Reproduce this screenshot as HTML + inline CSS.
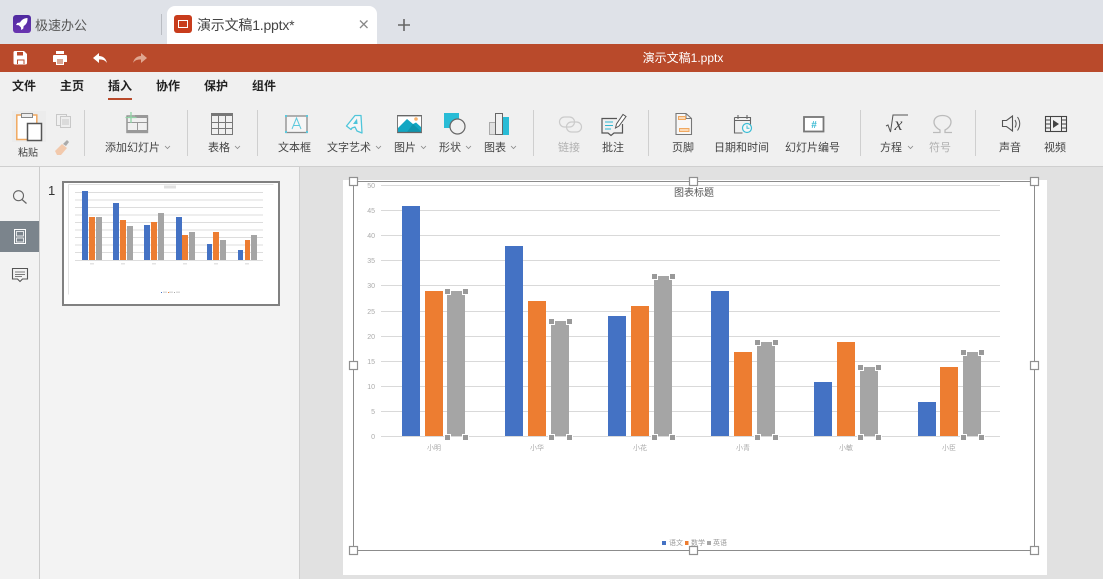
<!DOCTYPE html>
<html lang="zh">
<head>
<meta charset="utf-8">
<title>演示文稿1.pptx</title>
<style>
html,body{margin:0;padding:0;width:1103px;height:579px;overflow:hidden;background:#e1e1e1}
svg{display:block;position:absolute;left:0;top:0}
text{font-family:"Liberation Sans","Noto Sans CJK SC",sans-serif}
.r{font-size:11px;fill:#444}
.d{font-size:11px;fill:#b0b0b0}
.m{font-size:12px;fill:#222;font-weight:700}
.y{font-size:7px;fill:#aaa;text-anchor:end}
.c{font-size:7px;fill:#aaa;text-anchor:middle}
.l{font-size:7px;fill:#999}
.ch{fill:none;stroke:#888;stroke-width:.8}
.sq{fill:#999;stroke:#fff;stroke-width:1}
.h{fill:#fff;stroke:#909090;stroke-width:1.200}
.g{stroke:#d9d9d9;stroke-width:1}
</style>
</head>
<body>
<svg width="1103" height="579" viewBox="0 0 1103 579" xmlns="http://www.w3.org/2000/svg">
<defs>
<linearGradient id="pu" x1="0" y1="0" x2="0" y2="1"><stop offset="0" stop-color="#4f2aa0"/><stop offset="1" stop-color="#6a35b0"/></linearGradient>
</defs>
<!-- backgrounds -->
<rect width="1103" height="44" fill="#dfe2e8"/>
<rect y="44" width="1103" height="28" fill="#b94a2b"/>
<rect y="72" width="1103" height="94" fill="#f0f0f0"/>
<rect y="166" width="1103" height="1" fill="#cfcfcf"/>
<rect y="167" width="40" height="412" fill="#f2f2f2"/>
<rect x="39" y="167" width="1" height="412" fill="#cccccc"/>
<rect x="40" y="167" width="259" height="412" fill="#f3f3f3"/>
<rect x="299" y="167" width="1" height="412" fill="#cfcfcf"/>
<rect x="300" y="167" width="803" height="412" fill="#e1e1e1"/>

<!-- tabs -->
<rect x="13" y="15" width="18" height="18" rx="3" fill="url(#pu)"/>
<path d="M27.500 18c-3.500.2-5.800 1.700-7.500 4.500l-2.800.5-1.200 2 2.800.2 2.200 2.300.2 2.500 2-1.200.5-2.800c2.800-1.700 4-4 3.800-8z" fill="#fff"/>
<text x="35" y="30" font-size="13" fill="#555">极速办公</text>
<rect x="161" y="14" width="1" height="21" fill="#b9bcc2"/>
<path d="M167 44V14a8 8 0 0 1 8-8h194a8 8 0 0 1 8 8v30z" fill="#fff"/>
<rect x="174" y="15" width="18" height="18" rx="3" fill="#c83c1c"/>
<rect x="178.500" y="20.500" width="9" height="7" fill="none" stroke="#fff" stroke-width="1"/>
<text x="197" y="30" font-size="14" fill="#444" letter-spacing="-.2">演示文稿1.pptx*</text>
<path d="M360 20.500l7.500 7.500m0-7.500l-7.500 7.500" stroke="#888" stroke-width="1.300" fill="none"/>
<path d="M404 19v12M398 25h12" stroke="#666" stroke-width="1.600" fill="none"/>

<!-- quick bar -->
<path d="M15 51h9l3 3v9a1.500 1.500 0 0 1-1.500 1.500h-10.500a1.500 1.500 0 0 1-1.500-1.500V52.500A1.500 1.500 0 0 1 15 51z" fill="#fff"/>
<path d="M17 52v3.500h6V52zM17 59.500V64h7.500v-4.500z" fill="#b94a2b"/>
<path d="M18 60.500h5.500V64H18z" fill="#fff"/>
<path d="M56 51h8v3h-8zM54 55h12a1 1 0 0 1 1 1v6h-3v3h-8v-3h-3v-6a1 1 0 0 1 1-1z" fill="#fff"/>
<rect x="57" y="59" width="6" height="5" fill="#d9a795"/>
<path d="M93 58l6-5v3c4 0 7 2.500 8 7-2-3-4-3.500-8-3.500V63z" fill="#fff"/>
<path d="M147 58l-6-5v3c-4 0-7 2.500-8 7 2-3 4-3.500 8-3.500V63z" fill="#e0a791"/>
<text x="683" y="62" font-size="12" fill="#fff" text-anchor="middle">演示文稿1.pptx</text>

<!-- menu -->
<text class="m" x="12" y="90">文件</text>
<text class="m" x="60" y="90">主页</text>
<text class="m" x="108" y="90">插入</text>
<text class="m" x="156" y="90">协作</text>
<text class="m" x="204" y="90">保护</text>
<text class="m" x="252" y="90">组件</text>
<rect x="108" y="98" width="24" height="2" fill="#b94a2b"/>

<!-- separators -->
<g fill="#cfcfcf">
<rect x="84" y="110" width="1" height="46"/><rect x="187" y="110" width="1" height="46"/>
<rect x="257" y="110" width="1" height="46"/><rect x="533" y="110" width="1" height="46"/>
<rect x="648" y="110" width="1" height="46"/><rect x="860" y="110" width="1" height="46"/>
<rect x="975" y="110" width="1" height="46"/>
</g>

<!-- paste -->
<rect x="12" y="111" width="34" height="31" fill="#ececec"/>
<rect x="16.800" y="115" width="20" height="24.500" fill="#fff" stroke="#f0a860" stroke-width="1.500"/>
<rect x="21.500" y="113.500" width="11" height="4" fill="#eee" stroke="#888"/>
<rect x="27.500" y="123.500" width="14" height="17" fill="#fff" stroke="#555" stroke-width="1.500"/>
<text x="18" y="156" font-size="10" fill="#444">粘贴</text>
<g fill="none" stroke="#c8c8c8"><rect x="56.500" y="114.500" width="10" height="11"/><rect x="60.500" y="116.500" width="10" height="11" fill="#eee"/><path d="M62 120h7M62 122h7M62 124h7"/></g>
<path d="M55 151l7-7 5 4-6 7h-4z" fill="#f2c9ac"/><path d="M63 144l4-4 2 2-3 4z" fill="#aaa"/>

<!-- add slide -->
<rect x="127" y="116" width="20.500" height="16.500" fill="none" stroke="#888" stroke-width="1.300"/>
<rect x="135" y="115" width="13" height="3" fill="#999"/>
<rect x="127" y="130" width="21" height="3" fill="#999"/>
<path d="M137.500 123v8M127 122.500h20" stroke="#999" fill="none"/>
<path d="M131 112v11M125.500 117.500h11" stroke="#8fd3a5" stroke-width="1.300" fill="none"/>
<text class="r" x="105" y="151">添加幻灯片</text>
<path class="ch" d="M165 146l2.500 2.500 2.500-2.500"/>

<!-- table -->
<rect x="211.500" y="113.500" width="21" height="21" fill="none" stroke="#777" stroke-width="1"/>
<rect x="211" y="113" width="22" height="3" fill="#777"/>
<path d="M218.500 116v18M225.500 116v18M212 122.500h21M212 128.500h21" stroke="#777" fill="none"/>
<text class="r" x="208" y="151">表格</text>
<path class="ch" d="M235 146l2.500 2.500 2.500-2.500"/>

<!-- text box -->
<rect x="286" y="116" width="21" height="16.500" fill="#f6f6f6" stroke="#8a8a8a" stroke-width="1.300"/>
<g fill="#5cc9dd"><rect x="285" y="115" width="2" height="2"/><rect x="306" y="115" width="2" height="2"/><rect x="285" y="131" width="2" height="2"/><rect x="306" y="131" width="2" height="2"/></g>
<path d="M292 129l4.500-11 4.500 11M293.500 125.500h6" fill="none" stroke="#5cc9dd" stroke-width="1"/>
<text class="r" x="278" y="151">文本框</text>

<!-- word art -->
<path d="M346.500 126l8.500-10.500h6l1 17.500-5-2-2-4-3 1-1 1.500z" fill="#f6f6f6" stroke="#4fc5da" stroke-width="1.300" stroke-linejoin="round"/>
<path d="M353 124l4-5.500.6 5.500z" fill="#4fc5da"/>
<text class="r" x="327" y="151">文字艺术</text>
<path class="ch" d="M376 146l2.500 2.500 2.500-2.500"/>

<!-- picture -->
<rect x="397.500" y="115.500" width="24" height="17" fill="#fff"/>
<path d="M398 132v-4l9-9 6 5 3-1.500 5.500 5V132z" fill="#12a7c3"/>
<path d="M407 132l6-8 8.500 8z" fill="#0f95ad"/>
<circle cx="416" cy="119" r="1.800" fill="#f8b26a"/>
<path d="M397 115.700h25M397 132.500h25" stroke="#666" stroke-width="1.300"/>
<path d="M397.500 115.500v17M421.500 115.500v17" stroke="#777"/>
<text class="r" x="394" y="151">图片</text>
<path class="ch" d="M421 146l2.500 2.500 2.500-2.500"/>

<!-- shape -->
<rect x="444" y="113" width="15" height="15" fill="#29bcd6"/>
<circle cx="457.500" cy="126.500" r="7.500" fill="#f0f0f0" stroke="#666" stroke-width="1.200"/>
<text class="r" x="439" y="151">形状</text>
<path class="ch" d="M466 146l2.500 2.500 2.500-2.500"/>

<!-- chart icon -->
<rect x="489.500" y="122.500" width="6" height="12" fill="#e0e0e0" stroke="#aaa"/>
<rect x="502" y="117" width="7" height="18" fill="#29bcd6"/>
<rect x="495.500" y="113.500" width="7" height="21" fill="#f0f0f0" stroke="#666"/>
<text class="r" x="484" y="151">图表</text>
<path class="ch" d="M511 146l2.500 2.500 2.500-2.500"/>

<!-- link -->
<g fill="none" stroke="#cbcbcb" stroke-width="1.200"><rect x="559.500" y="117" width="15" height="10" rx="5"/><rect x="566.500" y="122" width="15" height="10" rx="5"/></g>
<text class="d" x="558" y="151">链接</text>

<!-- comment -->
<path d="M617 118.500h-15v14.500h6l3 2.500 3-2.500h8.500v-9" fill="none" stroke="#555" stroke-width="1.200"/>
<path d="M605 122h8M605 125.500h8M605 129h6" stroke="#2fb8d2" fill="none"/>
<path d="M615.500 128l1-4 6.500-9.500 3 2-7 9.500z" fill="#fff" stroke="#555"/>
<text class="r" x="602" y="151">批注</text>

<!-- footer -->
<path d="M676 113.500h10l5.500 5v16h-15.500z" fill="#f7f7f7" stroke="#777" stroke-width="1.100"/>
<path d="M686 113.500v5h5" fill="none" stroke="#777"/>
<rect x="678.500" y="116.500" width="7" height="3" fill="#fbd9b5" stroke="#f0a860"/>
<rect x="679.500" y="128.500" width="9.500" height="3" fill="#fbd9b5" stroke="#f0a860"/>
<text class="r" x="672" y="151">页脚</text>

<!-- date -->
<path d="M734.500 117.500h16v7M734.500 117.500v15.500h8" fill="none" stroke="#666" stroke-width="1.100"/>
<path d="M734.500 120.500h16M738 115v4M747 115v4" fill="none" stroke="#666" stroke-width="1.100"/>
<circle cx="747" cy="128" r="4.500" fill="#f7f7f7" stroke="#3abdd5" stroke-width="1.200"/>
<path d="M747 125.500v2.800h2.500" fill="none" stroke="#3abdd5"/>
<text class="r" x="714" y="151">日期和时间</text>

<!-- slide number -->
<rect x="804" y="117" width="19.500" height="14.500" fill="#fff" stroke="#777" stroke-width="1.800"/>
<text x="814" y="128" font-size="10" fill="#36b9d2" text-anchor="middle" font-weight="700">#</text>
<text class="r" x="785" y="151">幻灯片编号</text>

<!-- equation -->
<path d="M886 126l2-1 2.500 7 2.500-17h15" fill="none" stroke="#555" stroke-width="1"/>
<text x="894.500" y="130" font-size="18" font-style="italic" fill="#444" style="font-family:'Liberation Serif',serif">x</text>
<text class="r" x="880" y="151">方程</text>
<path class="ch" d="M908 146l2.500 2.500 2.500-2.500"/>

<!-- omega -->
<path d="M933 132.500h7v-2.500c-3.800-2-6-4.800-6-8 0-4 3.600-6.500 8.500-6.500s8.500 2.500 8.500 6.500c0 3.200-2.200 6-6 8v2.500h7" fill="none" stroke="#bbb" stroke-width="1.300"/>
<text class="d" x="929" y="151">符号</text>

<!-- sound -->
<path d="M1002.500 120.500h4l6-4.500v15l-6-4.500h-4z" fill="none" stroke="#555" stroke-width="1.100"/>
<path d="M1015 120c1.500 2.500 1.500 5 0 7.500M1017.500 117c3 4.500 3 9 0 13.500" fill="none" stroke="#555" stroke-width="1"/>
<text class="r" x="999" y="151">声音</text>

<!-- video -->
<rect x="1045.500" y="116.500" width="21" height="15" fill="none" stroke="#444" stroke-width="1.100"/>
<path d="M1050.500 116.500v15M1061.500 116.500v15M1045.500 120h5M1045.500 124h5M1045.500 128h5M1061.500 120h5M1061.500 124h5M1061.500 128h5" stroke="#444" fill="none"/>
<path d="M1053 120l6 4-6 4z" fill="#444"/>
<text class="r" x="1044" y="151">视频</text>

<!-- sidebar -->
<circle cx="18.500" cy="195.700" r="5" fill="none" stroke="#666" stroke-width="1.100"/>
<path d="M22 199.500l4.500 4" stroke="#666" stroke-width="1.200"/>
<rect y="221" width="39" height="31" fill="#7b848c"/>
<rect x="14.500" y="229.500" width="11" height="14" fill="none" stroke="#fff"/>
<rect x="16.500" y="231.500" width="7" height="4.500" fill="none" stroke="#fff" stroke-width=".8"/>
<rect x="16.500" y="238" width="7" height="4" fill="none" stroke="#fff" stroke-width=".8"/>
<path d="M12.500 268.500h15v10.500h-5l-2.500 2.500-2.500-2.500h-5z" fill="none" stroke="#555" stroke-width="1.100"/>
<path d="M15 272h10M15 274.500h10M15 276.500h7" stroke="#555" fill="none" stroke-width=".8"/>

<!-- thumbnail -->
<text x="48" y="195" font-size="13" fill="#333">1</text>
<rect x="63" y="182" width="216" height="123" fill="#fff" stroke="#808080" stroke-width="2"/>
<path d="M68.500 184.500h205M68.500 184.500v110" stroke="#e2e2e2" fill="none"/>
<path d="M75 192.500h188M75 200h188M75 207.500h188M75 215h188M75 222.500h188M75 230h188M75 237.500h188M75 245h188M75 252.500h188M75 260.500h188" stroke="#ddd" fill="none"/>
<rect x="164" y="185.500" width="12" height="3" fill="#e0e0e0"/>
<g fill="#4472c4"><rect x="82" y="191" width="6" height="69"/><rect x="113" y="203" width="6" height="57"/><rect x="144" y="225" width="6" height="35"/><rect x="176" y="217" width="6" height="43"/><rect x="207" y="244" width="5" height="16"/><rect x="238" y="250" width="5" height="10"/></g>
<g fill="#ed7d31"><rect x="89" y="217" width="6" height="43"/><rect x="120" y="220" width="6" height="40"/><rect x="151" y="222" width="6" height="38"/><rect x="182" y="235" width="6" height="25"/><rect x="213" y="232" width="6" height="28"/><rect x="245" y="240" width="5" height="20"/></g>
<g fill="#a5a5a5"><rect x="96" y="217" width="6" height="43"/><rect x="127" y="226" width="6" height="34"/><rect x="158" y="213" width="6" height="47"/><rect x="189" y="232" width="6" height="28"/><rect x="220" y="240" width="6" height="20"/><rect x="251" y="235" width="6" height="25"/></g>
<g fill="#e3e3e3"><rect x="90" y="263" width="4" height="1.500"/><rect x="121" y="263" width="4" height="1.500"/><rect x="152" y="263" width="4" height="1.500"/><rect x="183" y="263" width="4" height="1.500"/><rect x="214" y="263" width="4" height="1.500"/><rect x="245" y="263" width="4" height="1.500"/></g>
<rect x="161" y="292" width="1" height="1" fill="#4472c4"/><rect x="168" y="292" width="1" height="1" fill="#ed7d31"/><rect x="174" y="292" width="1" height="1" fill="#a5a5a5"/>
<rect x="163" y="291.500" width="4" height="1.500" fill="#ddd"/><rect x="169" y="291.500" width="4" height="1.500" fill="#ddd"/><rect x="176" y="291.500" width="4" height="1.500" fill="#ddd"/>

<!-- slide -->
<rect x="343" y="180" width="704" height="395" fill="#fff"/>

<!-- gridlines -->
<path class="g" d="M381 185.500h619M381 210.500h619M381 235.500h619M381 260.500h619M381 285.500h619M381 311.500h619M381 336.500h619M381 361.500h619M381 386.500h619M381 411.500h619M381 436.500h619"/>
<text class="y" x="375" y="188">50</text><text class="y" x="375" y="213">45</text><text class="y" x="375" y="238">40</text><text class="y" x="375" y="263">35</text><text class="y" x="375" y="288">30</text><text class="y" x="375" y="314">25</text><text class="y" x="375" y="339">20</text><text class="y" x="375" y="364">15</text><text class="y" x="375" y="389">10</text><text class="y" x="375" y="414">5</text><text class="y" x="375" y="439">0</text>
<text x="694" y="196" font-size="10" fill="#555" text-anchor="middle">图表标题</text>

<!-- bars -->
<g fill="#4472c4"><rect x="402" y="206" width="18" height="230"/><rect x="505" y="246" width="18" height="190"/><rect x="608" y="316" width="18" height="120"/><rect x="711" y="291" width="18" height="145"/><rect x="814" y="382" width="18" height="54"/><rect x="918" y="402" width="18" height="34"/></g>
<g fill="#ed7d31"><rect x="425" y="291" width="18" height="145"/><rect x="528" y="301" width="18" height="135"/><rect x="631" y="306" width="18" height="130"/><rect x="734" y="352" width="18" height="84"/><rect x="837" y="342" width="18" height="94"/><rect x="940" y="367" width="18" height="69"/></g>
<g fill="#a5a5a5"><rect x="447" y="291" width="18" height="145"/><rect x="551" y="321" width="18" height="115"/><rect x="654" y="276" width="18" height="160"/><rect x="757" y="342" width="18" height="94"/><rect x="860" y="367" width="18" height="69"/><rect x="963" y="352" width="18" height="84"/></g>
<!-- small selection squares on gray bars -->
<g class="sq">
<rect x="444.500" y="288.500" width="6" height="6"/><rect x="462.500" y="288.500" width="6" height="6"/><rect x="444.500" y="434.500" width="6" height="6"/><rect x="462.500" y="434.500" width="6" height="6"/>
<rect x="548.500" y="318.500" width="6" height="6"/><rect x="566.500" y="318.500" width="6" height="6"/><rect x="548.500" y="434.500" width="6" height="6"/><rect x="566.500" y="434.500" width="6" height="6"/>
<rect x="651.500" y="273.500" width="6" height="6"/><rect x="669.500" y="273.500" width="6" height="6"/><rect x="651.500" y="434.500" width="6" height="6"/><rect x="669.500" y="434.500" width="6" height="6"/>
<rect x="754.500" y="339.500" width="6" height="6"/><rect x="772.500" y="339.500" width="6" height="6"/><rect x="754.500" y="434.500" width="6" height="6"/><rect x="772.500" y="434.500" width="6" height="6"/>
<rect x="857.500" y="364.500" width="6" height="6"/><rect x="875.500" y="364.500" width="6" height="6"/><rect x="857.500" y="434.500" width="6" height="6"/><rect x="875.500" y="434.500" width="6" height="6"/>
<rect x="960.500" y="349.500" width="6" height="6"/><rect x="978.500" y="349.500" width="6" height="6"/><rect x="960.500" y="434.500" width="6" height="6"/><rect x="978.500" y="434.500" width="6" height="6"/>
</g>

<!-- categories -->
<text class="c" x="434" y="450">小明</text><text class="c" x="537" y="450">小华</text><text class="c" x="640" y="450">小花</text><text class="c" x="743" y="450">小青</text><text class="c" x="846" y="450">小敏</text><text class="c" x="949" y="450">小臣</text>

<!-- legend -->
<rect x="662" y="541" width="4" height="4" fill="#4472c4"/><text class="l" x="669" y="545">语文</text>
<rect x="685" y="541" width="3.500" height="4" fill="#ed7d31"/><text class="l" x="691" y="545">数学</text>
<rect x="707" y="541" width="4" height="4" fill="#a5a5a5"/><text class="l" x="713" y="545">英语</text>

<!-- selection frame -->
<rect x="353.500" y="181.500" width="681" height="369" fill="none" stroke="#8c8c8c" stroke-width="1"/>
<rect class="h" x="349.500" y="177.500" width="8" height="8"/><rect class="h" x="689.500" y="177.500" width="8" height="8"/><rect class="h" x="1030.500" y="177.500" width="8" height="8"/>
<rect class="h" x="349.500" y="361.500" width="8" height="8"/><rect class="h" x="1030.500" y="361.500" width="8" height="8"/>
<rect class="h" x="349.500" y="546.500" width="8" height="8"/><rect class="h" x="689.500" y="546.500" width="8" height="8"/><rect class="h" x="1030.500" y="546.500" width="8" height="8"/>
</svg>
</body>
</html>
